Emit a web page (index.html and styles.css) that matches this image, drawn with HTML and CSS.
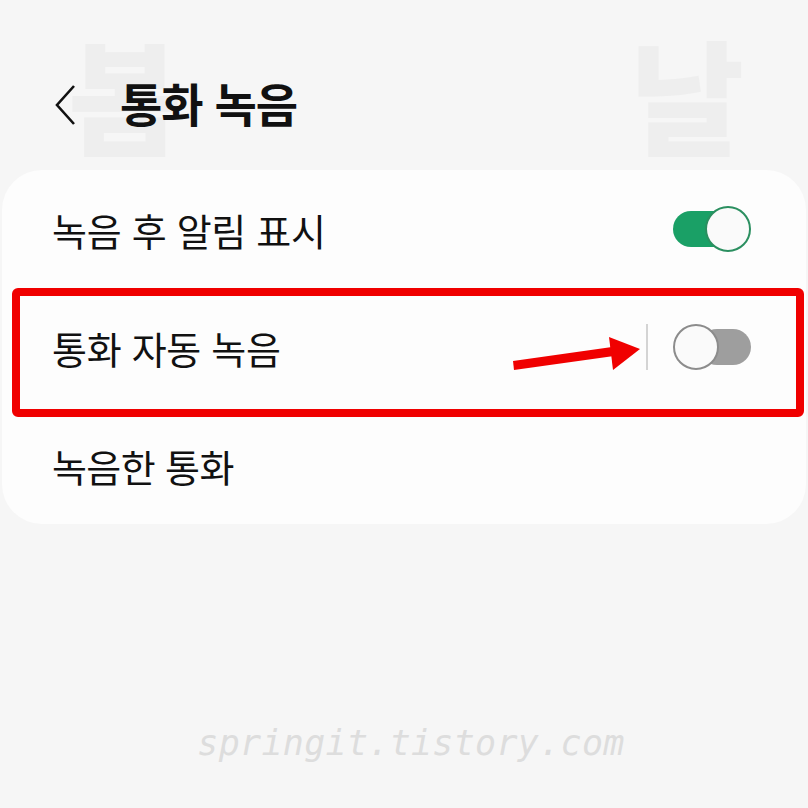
FILE: index.html
```html
<!DOCTYPE html>
<html lang="ko">
<head>
    <meta charset="UTF-8">
    <meta name="viewport" content="width=device-width, initial-scale=1.0">
    <title>통화 녹음</title>
    <link rel="stylesheet" href="styles.css">
</head>
<body>
    <div class="screen">
        <!-- faded background letters -->
        <span class="bg-letter bg-left">봄</span>
        <span class="bg-letter bg-right">날</span>

        <header class="top-bar">
            <svg class="back-icon" width="24" height="42" viewBox="0 0 24 42">
                <path d="M20 2 L3 21 L20 40" fill="none" stroke="#111" stroke-width="2.6" stroke-linejoin="miter"/>
            </svg>
            <h1>통화 녹음</h1>
        </header>

        <div class="card">
            <div class="row">
                <span class="label">녹음 후 알림 표시</span>
                <span class="switch on"><span class="knob"></span></span>
            </div>
            <div class="row">
                <span class="label">통화 자동 녹음</span>
                <div class="row-end">
                    <span class="divider"></span>
                    <span class="switch off"><span class="knob"></span></span>
                </div>
            </div>
            <div class="row">
                <span class="label tight">녹음한 통화</span>
            </div>
        </div>

        <div class="watermark">springit.tistory.com</div>

        <!-- annotation -->
        <div class="highlight-box"></div>
        <svg class="pointer-arrow" width="140" height="45" viewBox="0 0 140 45">
            <polygon points="8,31 9,40 109,26 107,17" fill="#f00000"/>
            <polygon points="104,7 135,19 108,40" fill="#f00000"/>
        </svg>
    </div>
</body>
</html>
```

FILE: styles.css
```css
:root {
    --bg: #f6f6f6;
    --card: #fdfdfd;
    --text: #111111;
    --green: #1aa066;
    --red: #f00000;
}

body {
    margin: 0;
    background: var(--bg);
    font-family: "Noto Sans CJK KR", "Noto Sans", sans-serif;
    color: var(--text);
}

.screen {
    position: relative;
    width: 808px;
    height: 808px;
    overflow: hidden;
}

.bg-letter {
    position: absolute;
    font-size: 124px;
    font-weight: 900;
    line-height: 1;
    color: #eeeeee;
}

.bg-left {
    left: 68px;
    top: 30px;
}

.bg-right {
    left: 630px;
    top: 30px;
}

.top-bar {
    position: relative;
    height: 130px;
    padding: 40px 0 0 54px;
    box-sizing: content-box;
    display: flex;
    align-items: center;
}

.back-icon {
    margin-right: 42px;
}

h1 {
    margin: -6px 0 0;
    font-size: 46px;
    font-weight: 700;
    letter-spacing: -1px;
}

.card {
    margin: 0 2px;
    background: var(--card);
    border-radius: 40px;
}

.row {
    height: 118px;
    display: flex;
    align-items: center;
    justify-content: space-between;
    padding: 0 55px 0 50px;
}

.label {
    font-size: 38px;
    letter-spacing: -0.3px;
}

.label.tight {
    letter-spacing: -0.6px;
}

.row-end {
    display: flex;
    align-items: center;
}

.divider {
    width: 2px;
    height: 46px;
    background: #d4d4d4;
    margin-right: 25px;
}

.switch {
    position: relative;
    width: 78px;
    height: 48px;
    display: block;
}

.switch::before {
    content: "";
    position: absolute;
    top: 6px;
    height: 36px;
    border-radius: 18px;
}

.switch.on::before {
    left: 0;
    right: 18px;
    background: var(--green);
}

.switch.off::before {
    left: 26px;
    right: 0;
    background: #9e9e9e;
}

.knob {
    position: absolute;
    top: 1px;
    width: 42px;
    height: 42px;
    border-radius: 50%;
    background: #fafafa;
}

.switch.on .knob {
    right: 0;
    border: 2.5px solid #2b8f60;
}

.switch.off .knob {
    left: 0;
    border: 2.5px solid #8c8c8c;
}

.watermark {
    margin-top: 199px;
    padding-left: 14px;
    text-align: center;
    font-family: "DejaVu Sans Mono", monospace;
    font-style: italic;
    font-size: 35px;
    color: #dddddd;
    letter-spacing: 0.3px;
}

.highlight-box {
    position: absolute;
    left: 12px;
    top: 288px;
    width: 792px;
    height: 129px;
    box-sizing: border-box;
    border: 8px solid var(--red);
    border-radius: 6px;
}

.pointer-arrow {
    position: absolute;
    left: 505px;
    top: 330px;
}
```
